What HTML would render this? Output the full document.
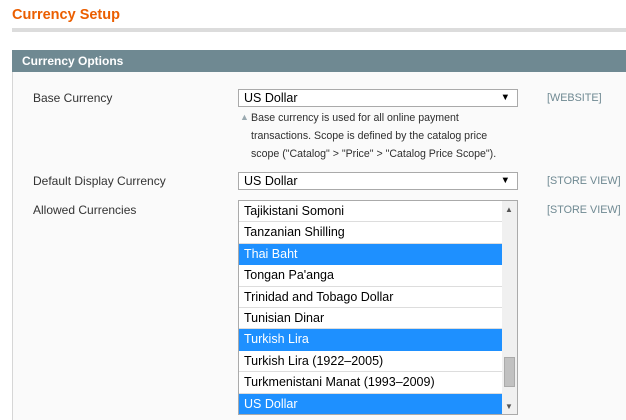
<!DOCTYPE html>
<html><head><style>
*{margin:0;padding:0;box-sizing:border-box}
body{width:626px;height:420px;overflow:hidden;background:#fff;font-family:"Liberation Sans",Arial,sans-serif;position:relative;color:#2f2f2f}
.a{position:absolute}
h1{position:absolute;left:12px;top:7px;font-size:14.5px;color:#eb5e00;font-weight:bold}
.line{left:12px;top:28px;width:614px;height:4px;background:#dcdcdc}
.hdr{left:12px;top:50px;width:614px;height:22px;background:#6f8992;color:#fff;font-weight:bold;font-size:12px;padding:4px 10px}
.panel{left:12px;top:72px;width:614px;height:348px;background:#fafafa;border-left:1px solid #d6d6d6}
.lbl{font-size:12px;color:#333;left:33px}
.sel{left:238px;width:280px;height:18px;border:1px solid #aaa;background:#fff;font-size:12.5px;color:#000;padding:1px 5px}
.sel .ar{position:absolute;right:7px;top:2px;font-size:9.5px}
.scope{left:547px;font-size:10.8px;color:#6f8992}
.note{left:251px;top:109px;font-size:10.6px;line-height:18px;color:#2f2f2f;width:255px}
.tri{left:240px;top:112px;font-size:9px;color:#9aa9b0}
.list{left:238px;top:200px;width:280px;height:215px;border:1px solid #aaa;background:#fff;overflow:hidden}
.row{height:21.4px;border-bottom:1px solid #ddd;font-size:12.5px;color:#000;padding:3px 5px;width:264px}
.row.s{background:#1e90ff;color:#fff;border-bottom-color:#1e90ff}
.sb{position:absolute;right:0;top:0;width:15px;height:100%;background:#f0f0f0}
.th{position:absolute;left:2px;top:156px;width:11px;height:30px;background:#c1c1c1;border:1px solid #aaa}
</style></head><body>
<h1>Currency Setup</h1>
<div class="a line"></div>
<div class="a hdr">Currency Options</div>
<div class="a panel"></div>
<div class="a lbl" style="top:91px">Base Currency</div>
<div class="a sel" style="top:89px">US Dollar<span class="ar">▼</span></div>
<div class="a scope" style="top:92px">[WEBSITE]</div>
<div class="a tri">▲</div>
<div class="a note">Base currency is used for all online payment transactions. Scope is defined by the catalog price scope ("Catalog" &gt; "Price" &gt; "Catalog Price Scope").</div>
<div class="a lbl" style="top:174px">Default Display Currency</div>
<div class="a sel" style="top:172px">US Dollar<span class="ar">▼</span></div>
<div class="a scope" style="top:175px">[STORE VIEW]</div>
<div class="a lbl" style="top:203px">Allowed Currencies</div>
<div class="a scope" style="top:204px">[STORE VIEW]</div>
<div class="a list">
<div class="row">Tajikistani Somoni</div>
<div class="row">Tanzanian Shilling</div>
<div class="row s">Thai Baht</div>
<div class="row">Tongan Pa'anga</div>
<div class="row">Trinidad and Tobago Dollar</div>
<div class="row">Tunisian Dinar</div>
<div class="row s">Turkish Lira</div>
<div class="row">Turkish Lira (1922–2005)</div>
<div class="row">Turkmenistani Manat (1993–2009)</div>
<div class="row s">US Dollar</div>
<div class="sb"><div style="position:absolute;left:3px;top:4px;font-size:8px;color:#555">▲</div><div class="th"></div><div style="position:absolute;left:3px;bottom:3px;font-size:8px;color:#555">▼</div></div>
</div>
</body></html>
